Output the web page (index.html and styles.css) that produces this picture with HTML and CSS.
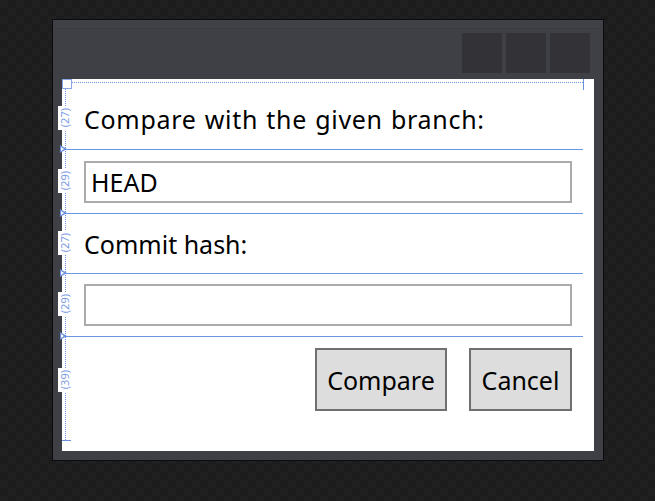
FILE: index.html
```html
<!DOCTYPE html>
<html>
<head>
<meta charset="utf-8">
<link rel="stylesheet" href="styles.css">
</head>
<body>
<div class="window">
  <div class="titlebar">
    <div class="tb-btn"></div>
    <div class="tb-btn"></div>
    <div class="tb-btn"></div>
  </div>
  <div class="content">
    <div class="grid">
      <div class="row row1"><span class="label">Compare with the given branch:</span></div>
      <div class="row row2"><div class="textbox">HEAD</div></div>
      <div class="row row3"><span class="label">Commit hash:</span></div>
      <div class="row row4"><div class="textbox"></div></div>
      <div class="row row5">
        <button class="btn btn-compare">Compare</button>
        <button class="btn btn-cancel">Cancel</button>
      </div>
    </div>

    <div class="corner"></div>
    <div class="dot-top"></div>
    <div class="tick-top"></div>
    <div class="dot-left"></div>
    <div class="tick-bottom"></div>

    <div class="tri tri1"></div>
    <div class="tri tri2"></div>
    <div class="tri tri3"></div>
    <div class="tri tri4"></div>

    <div class="rowlabel rl1"><span>(27)</span></div>
    <div class="rowlabel rl2"><span>(29)</span></div>
    <div class="rowlabel rl3"><span>(27)</span></div>
    <div class="rowlabel rl4"><span>(29)</span></div>
    <div class="rowlabel rl5"><span>(39)</span></div>
  </div>
</div>
</body>
</html>
```

FILE: styles.css
```css
html, body {
  margin: 0;
  padding: 0;
}
body {
  width: 655px;
  height: 501px;
  overflow: hidden;
  background-color: #1e1e1e;
  background-image: repeating-conic-gradient(#1c1c1c 0 25%, #202020 0 50%);
  background-size: 16px 16px;
  padding: 19px 0 0 52px;
  box-sizing: border-box;
  font-family: "Noto Sans", "Open Sans", sans-serif;
}
.window {
  width: 552px;
  height: 442px;
  box-sizing: border-box;
  border: 1px solid #0c0c0c;
  background: #3f3f46;
}
.titlebar {
  height: 59px;
  box-sizing: border-box;
  border-top: 8px solid #404047;
  box-shadow: inset 0 1px 0 #3a3a40;
  display: flex;
  justify-content: flex-end;
  gap: 4px;
  padding: 5px 13px 0 0;
}
.tb-btn {
  width: 40px;
  height: 40px;
  background: #333337;
}
.content {
  position: relative;
  margin-left: 9px;
  width: 532px;
  height: 372px;
  background: #ffffff;
}
.grid {
  position: absolute;
  left: 0;
  top: 3px;
  width: 521px;
  display: grid;
  grid-template-rows: 68px 64px 60px 63px 103px;
}
.row {
  box-sizing: border-box;
  border-bottom: 1px solid #6b96e4;
  padding: 0 11px 0 22px;
}
.row5 {
  border-bottom: none;
  display: flex;
  justify-content: flex-end;
  gap: 22px;
  padding-top: 11px;
}
.label {
  display: block;
  font-size: 25px;
  line-height: 32px;
  color: #000;
}
.row1 .label {
  padding-top: 21px;
  letter-spacing: 0.7px;
  word-spacing: 1px;
}
.row3 .label {
  padding-top: 14px;
}
.textbox {
  box-sizing: border-box;
  height: 42px;
  border: 2px solid #ababab;
  font-size: 25px;
  line-height: 38px;
  padding-left: 5px;
  color: #000;
}
.row2 .textbox {
  margin-top: 11px;
}
.row4 .textbox {
  margin-top: 10px;
}
.btn {
  box-sizing: border-box;
  height: 63px;
  border: 2px solid #707070;
  background: #dddddd;
  font-family: "Noto Sans", "Open Sans", sans-serif;
  font-size: 25px;
  color: #000;
  padding: 0;
}
.btn-compare {
  width: 132px;
}
.btn-cancel {
  width: 103px;
}

/* designer adornments */
.corner {
  position: absolute;
  left: 0;
  top: 0;
  width: 10px;
  height: 10px;
  box-sizing: border-box;
  border: 1px solid #8aa6e2;
  background: #fff;
}
.dot-top {
  position: absolute;
  left: 10px;
  top: 3px;
  width: 511px;
  border-top: 1px dotted #6b8fdc;
}
.tick-top {
  position: absolute;
  left: 521px;
  top: 0;
  width: 1px;
  height: 11px;
  background: #6b8fdc;
}
.dot-left {
  position: absolute;
  left: 3px;
  top: 10px;
  height: 351px;
  border-left: 1px dotted #6b8fdc;
}
.tick-bottom {
  position: absolute;
  left: 0;
  top: 361px;
  width: 9px;
  height: 1px;
  background: #6b8fdc;
}
.tri {
  position: absolute;
  left: -2px;
  width: 7px;
  height: 8px;
}
.tri::before {
  content: "";
  position: absolute;
  left: 0;
  top: 0;
  border-style: solid;
  border-width: 4px 0 4px 7px;
  border-color: transparent transparent transparent #6b8fdc;
}
.tri::after {
  content: "";
  position: absolute;
  left: 1px;
  top: 2px;
  border-style: solid;
  border-width: 2px 0 2px 3.5px;
  border-color: transparent transparent transparent #ffffff;
}
.tri1 { top: 66px; }
.tri2 { top: 130px; }
.tri3 { top: 190px; }
.tri4 { top: 253px; }
.rowlabel {
  position: absolute;
  left: -4px;
  width: 10px;
  height: 24px;
  background: #fff;
  display: flex;
  align-items: center;
  justify-content: center;
}
.rowlabel span {
  writing-mode: vertical-rl;
  transform: rotate(180deg);
  font-family: "Noto Sans", sans-serif;
  font-size: 11px;
  line-height: 10px;
  color: #7b9be4;
  margin-left: 4px;
}
.rl1 { top: 27px; }
.rl2 { top: 90px; }
.rl3 { top: 152px; }
.rl4 { top: 213px; }
.rl5 { top: 289px; }
```
